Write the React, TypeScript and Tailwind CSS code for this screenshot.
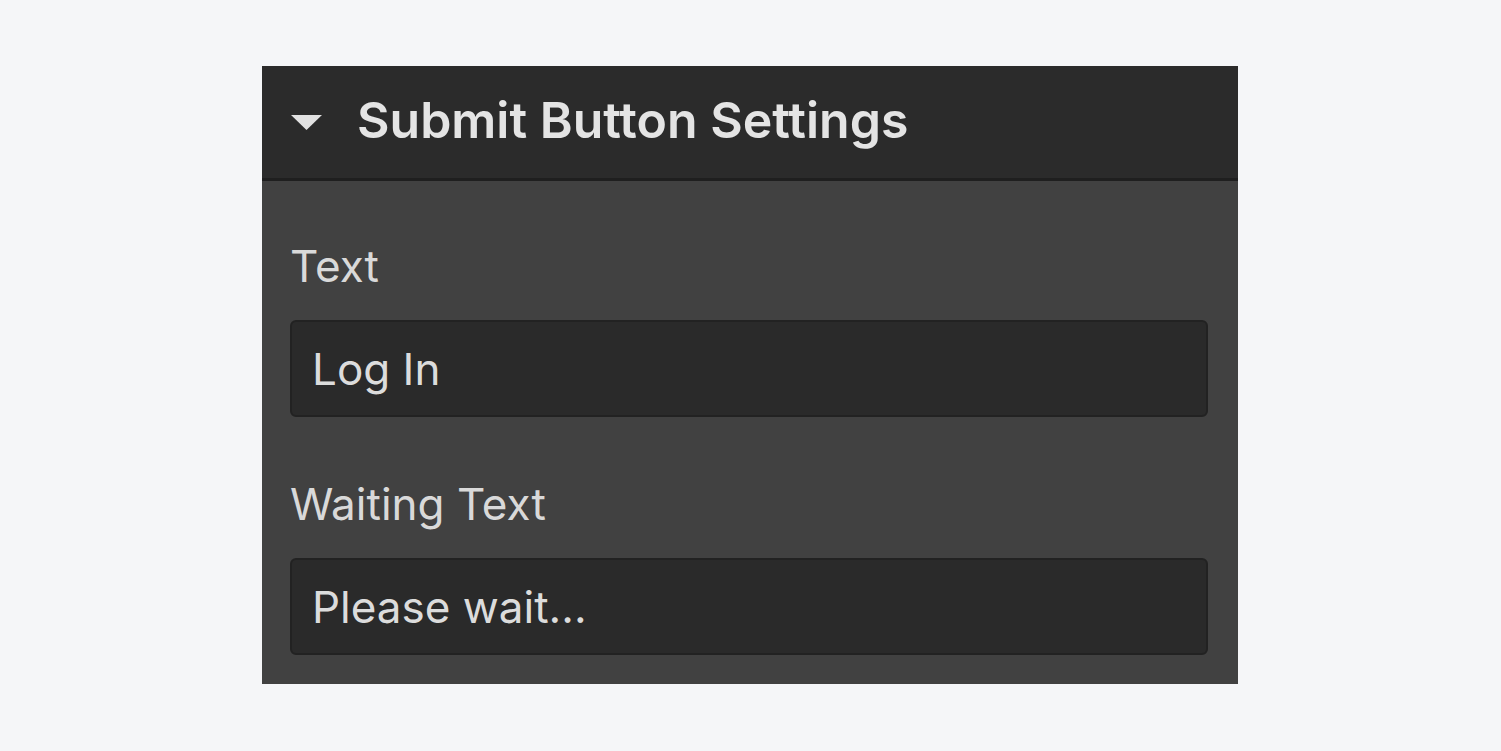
import React from "react";

function Field({ label, value, top }: { label: string; value: string; top: string }) {
  return (
    <div className={`flex flex-col ${top}`}>
      <div className="text-[44px] leading-[44px] text-[#d9d9d9]">{label}</div>
      <div className="mt-[32px] flex h-[97px] items-center rounded-[6px] border-2 border-[#222222] bg-[#2a2a2a] px-[20px] text-[44px] leading-[44px] text-[#dcdcdc]">
        {value}
      </div>
    </div>
  );
}

export default function App() {
  return (
    <div className="h-[751px] w-full bg-[#f5f6f8] pl-[262px] pt-[66px] font-['Inter',sans-serif]">
      <div className="flex h-[618px] w-[976px] flex-col bg-[#414141]">
        <div className="flex h-[115px] items-center border-b-[3px] border-[#1f1f1f] bg-[#2b2b2b] pb-[4px] pl-[29px]">
          <svg width="31" height="15" viewBox="0 0 31 15" className="mr-[35px] mt-[4px]">
            <polygon points="0,0 31,0 15.5,15" fill="#e2e2e2" />
          </svg>
          <span className="text-[50px] font-semibold leading-[50px] text-[#e4e4e4]">
            Submit Button Settings
          </span>
        </div>
        <div className="flex flex-col px-[28px] pr-[30px]">
          <Field label="Text" value="Log In" top="mt-[63px]" />
          <Field label="Waiting Text" value="Please wait..." top="mt-[65px]" />
        </div>
      </div>
    </div>
  );
}
